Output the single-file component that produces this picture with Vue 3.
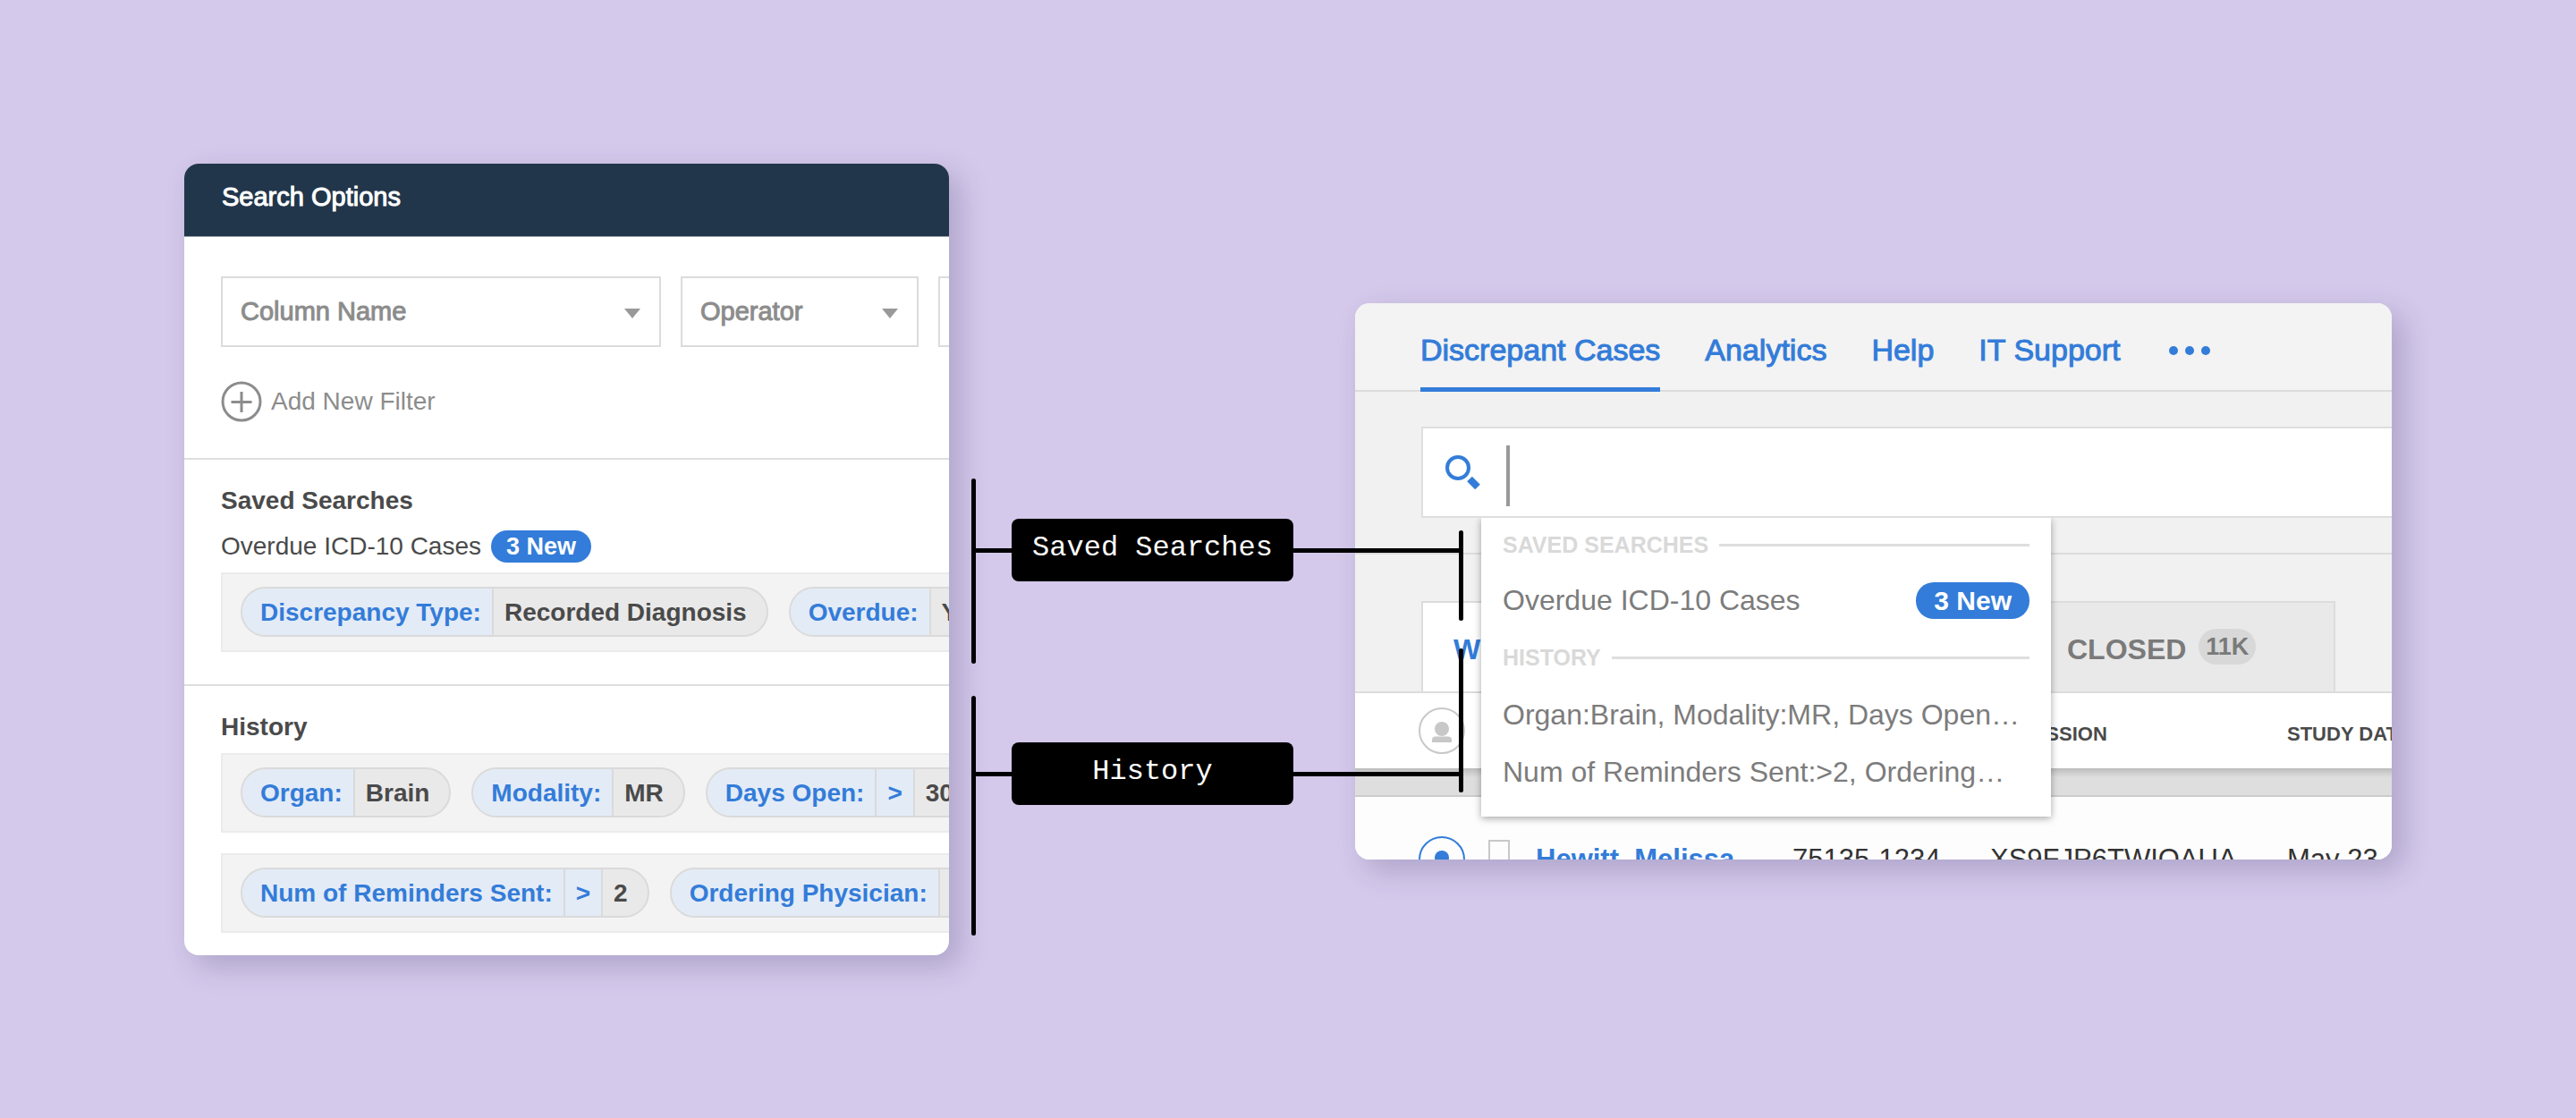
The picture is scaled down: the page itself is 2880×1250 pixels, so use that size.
<script setup>
import { ref } from 'vue'

const query = ref('')

const columns = ['Column Name']
const operators = ['Operator']

const savedSearches = [
  {
    name: 'Overdue ICD-10 Cases',
    badge: '3 New',
    filters: [
      { parts: ['Discrepancy Type:'], value: 'Recorded Diagnosis' },
      { parts: ['Overdue:'], value: 'Yes' },
    ],
  },
]

const history = [
  [
    { parts: ['Organ:'], value: 'Brain' },
    { parts: ['Modality:'], value: 'MR' },
    { parts: ['Days Open:', '>'], value: '30' },
  ],
  [
    { parts: ['Num of Reminders Sent:', '>'], value: '2' },
    { parts: ['Ordering Physician:'], value: '' },
  ],
]

const nav = ['Discrepant Cases', 'Analytics', 'Help', 'IT Support']
const recent = ['Organ:Brain, Modality:MR, Days Open…', 'Num of Reminders Sent:>2, Ordering…']
const callouts = ['Saved Searches', 'History']
</script>

<template>
  <main class="stage">
    <section class="card options">
      <header class="options-head">Search Options</header>

      <div class="filters">
        <div class="fields">
          <span class="field wide">
            <select aria-label="Column Name">
              <option v-for="c in columns" :key="c">{{ c }}</option>
            </select>
            <svg class="caret" viewBox="0 0 18 11"><path d="M0 0h18L9 11z" /></svg>
          </span>
          <span class="field narrow">
            <select aria-label="Operator">
              <option v-for="o in operators" :key="o">{{ o }}</option>
            </select>
            <svg class="caret" viewBox="0 0 18 11"><path d="M0 0h18L9 11z" /></svg>
          </span>
          <input class="field-value" type="text" aria-label="Value" />
        </div>
        <button class="add" type="button">
          <svg viewBox="0 0 46 46" fill="none" stroke="currentColor" stroke-width="3">
            <circle cx="23" cy="23" r="21" />
            <path d="M23 12v23M11.500 23.500h23" />
          </svg>
          Add New Filter
        </button>
      </div>

      <div class="group">
        <h2>Saved Searches</h2>
        <template v-for="s in savedSearches" :key="s.name">
          <p class="saved-name">{{ s.name }} <span class="badge">{{ s.badge }}</span></p>
          <div class="tray">
            <span v-for="(f, i) in s.filters" :key="i" class="pill">
              <b v-for="p in f.parts" :key="p" class="key">{{ p }}</b>
              <b class="val">{{ f.value }}</b>
            </span>
          </div>
        </template>
      </div>

      <div class="group history">
        <h2>History</h2>
        <div v-for="(row, r) in history" :key="r" class="tray">
          <span v-for="(f, i) in row" :key="i" class="pill">
            <b v-for="p in f.parts" :key="p" class="key">{{ p }}</b>
            <b class="val">{{ f.value }}</b>
          </span>
        </div>
      </div>
    </section>

    <aside class="callouts">
      <div class="brackets left"><i class="tall-1"></i><i class="tall-2"></i></div>
      <div class="labels">
        <div v-for="c in callouts" :key="c" class="callout">
          <i class="lead"></i><span class="tag">{{ c }}</span><i class="trail"></i>
        </div>
      </div>
      <div class="brackets right"><i class="short-1"></i><i class="short-2"></i></div>
    </aside>

    <section class="card cases">
      <nav class="nav">
        <a v-for="(n, i) in nav" :key="n" href="#" :class="{ active: i === 0 }">{{ n }}</a>
        <button class="more" type="button" aria-label="More">
          <svg viewBox="0 0 48 12" fill="currentColor">
            <circle cx="6" cy="6" r="5" /><circle cx="24" cy="6" r="5" /><circle cx="42" cy="6" r="5" />
          </svg>
        </button>
      </nav>

      <div class="search-band">
        <div class="search">
          <svg class="lens" viewBox="0 0 40 40">
            <circle cx="15" cy="15" r="12" fill="none" stroke="currentColor" stroke-width="4" />
            <path d="M28 27.500l9 9" stroke="currentColor" stroke-width="8" />
          </svg>
          <i class="cursor"></i>
          <input v-model="query" type="search" aria-label="Search" />

          <div class="menu">
            <div class="menu-head">SAVED SEARCHES</div>
            <a href="#" class="menu-item">Overdue ICD-10 Cases<span class="badge large">3 New</span></a>
            <div class="menu-head">HISTORY</div>
            <a v-for="r in recent" :key="r" href="#" class="menu-item">{{ r }}</a>
          </div>
        </div>
      </div>

      <div class="tabs">
        <button class="tab current" type="button">W</button>
        <button class="tab closed" type="button">CLOSED <span class="count">11K</span></button>
      </div>

      <div class="list">
        <table>
          <colgroup>
            <col class="c-user" /><col class="c-doc" /><col class="c-name" />
            <col class="c-id" /><col class="c-acc" /><col />
          </colgroup>
          <thead>
            <tr>
              <th class="user">
                <svg class="avatar" viewBox="0 0 52 52" fill="currentColor">
                  <circle cx="26" cy="26" r="25" fill="none" stroke="currentColor" stroke-width="2" />
                  <circle cx="26" cy="24" r="8" />
                  <path d="M15 39v-2.500a4 4 0 0 1 4-4h14a4 4 0 0 1 4 4V39z" />
                </svg>
              </th>
              <th></th><th></th><th></th>
              <th class="label">ACCESSION</th>
              <th class="label">STUDY DATE</th>
            </tr>
          </thead>
          <tbody>
            <tr class="band"><td colspan="6"></td></tr>
            <tr class="case">
              <td class="user">
                <svg class="avatar" viewBox="0 0 52 52" fill="currentColor">
                  <circle cx="26" cy="26" r="25" fill="none" stroke="currentColor" stroke-width="2" />
                  <circle cx="26" cy="24" r="8" />
                  <path d="M15 39v-2.500a4 4 0 0 1 4-4h14a4 4 0 0 1 4 4V39z" />
                </svg>
              </td>
              <td>
                <svg class="doc" viewBox="0 0 24 44" fill="none" stroke="currentColor" stroke-width="2">
                  <rect x="1" y="1" width="22" height="42" />
                </svg>
              </td>
              <td><a href="#">Hewitt, Melissa</a></td>
              <td>75135-1234</td>
              <td>XS9FJP6TWIOAUA</td>
              <td>May 23</td>
            </tr>
          </tbody>
        </table>
      </div>
    </section>
  </main>
</template>

<style>
body {
  margin: 0;
  background: #d4c9eb;
}
</style>

<style scoped>
.stage,
.stage * {
  box-sizing: border-box;
}

.stage {
  display: grid;
  grid-template-columns: 855fr 454fr 1159fr;
  align-items: center;
  min-height: 100vh;
  padding: 0 206px;
  overflow: hidden;
  font-family: "Liberation Sans", Arial, sans-serif;
  font-size: 28px;
  line-height: 36px;
  white-space: nowrap;
  background: #d4c9eb;
}

button,
input,
select {
  font: inherit;
  color: inherit;
  margin: 0;
}

a {
  color: inherit;
  text-decoration: none;
}

svg {
  display: block;
  flex: none;
}

.card {
  min-width: 0;
  border-radius: 16px;
  overflow: hidden;
  background: #fff;
  box-shadow: 12px 12px 32px rgba(40, 30, 80, 0.22);
}

/* Search options */
.options-head {
  height: 82px;
  padding: 19px 42px 0;
  background: #22364b;
  border-bottom: 1px solid #9aa4ae;
  color: #fff;
  font-size: 29px;
}

.filters {
  padding: 44px 0 40px 41px;
}

.fields {
  display: flex;
  gap: 22px;
  color: #8c8c8c;
  font-size: 29px;
}

.field {
  position: relative;
  flex: none;
}

.wide {
  width: 492px;
}

.narrow {
  width: 266px;
}

.field select,
.field-value {
  width: 100%;
  height: 79px;
  padding: 0 20px;
  border: 2px solid #dcdcdc;
  border-radius: 0;
  background: #fff;
  appearance: none;
  outline: none;
}

.field-value {
  flex: none;
  width: 300px;
}

.options-head,
.field select {
  -webkit-text-stroke: 1px currentColor;
}

.caret {
  position: absolute;
  right: 23px;
  top: 36px;
  width: 18px;
  height: 11px;
  fill: #999;
  pointer-events: none;
}

.add {
  display: flex;
  align-items: center;
  gap: 10px;
  margin-top: 38px;
  padding: 0;
  border: 0;
  background: none;
  color: #8c8c8c;
}

.add svg {
  width: 46px;
  height: 46px;
}

.group {
  padding: 28px 0 36px 41px;
  border-top: 2px solid #dedede;
  color: #4a4a4a;
}

.history {
  padding-bottom: 25px;
}

h2 {
  margin: 0;
  font-size: 28px;
  line-height: 36px;
}

.saved-name {
  display: flex;
  align-items: center;
  gap: 11px;
  margin: 15px 0 11px;
}

.badge {
  padding: 0 17px;
  border-radius: 20px;
  background: #337cd9;
  color: #fff;
  font-size: 27px;
  line-height: 36px;
  font-weight: 700;
}

.tray {
  display: flex;
  gap: 23px;
  height: 89px;
  padding: 14px 0 0 20px;
  border: 2px solid #ebebeb;
  border-right: 0;
  background: #f3f3f3;
}

h2 + .tray {
  margin-top: 11px;
}

.tray + .tray {
  margin-top: 23px;
}

.pill {
  display: flex;
  flex: none;
  height: 56px;
  border: 2px solid #dadada;
  border-radius: 28px;
  background: #e9e9e9;
  line-height: 54px;
  overflow: hidden;
}

.key,
.val {
  padding: 0 12px;
}

.key {
  border-right: 2px solid #dadada;
  background: #e3ebf6;
  color: #337cd9;
}

.key:first-child {
  padding-left: 20px;
}

.val {
  padding-right: 22px;
}

.val:empty {
  min-width: 100px;
}

/* Callouts between the two cards */
.callouts {
  position: relative;
  z-index: 1;
  display: flex;
  align-items: flex-start;
  margin: 331px -121px 0 25px;
}

.callouts i {
  flex: none;
  background: #000;
}

.brackets {
  display: flex;
  flex-direction: column;
}

.brackets i {
  width: 5px;
  border-radius: 3px;
}

.left {
  gap: 36px;
}

.right {
  gap: 31px;
  padding-top: 58px;
}

.tall-1 {
  height: 207px;
}

.tall-2 {
  height: 268px;
}

.short-1 {
  height: 101px;
}

.short-2 {
  height: 161px;
}

.labels {
  display: flex;
  flex: 1;
  flex-direction: column;
  gap: 180px;
  padding-top: 45px;
}

.callout {
  display: flex;
  align-items: center;
}

.lead {
  width: 40px;
  height: 5px;
}

.callouts .trail {
  flex: 1;
  height: 5px;
}

.tag {
  width: 315px;
  padding-bottom: 4px;
  border-radius: 8px;
  background: #000;
  color: #fff;
  font-family: "Liberation Mono", monospace;
  font-size: 32px;
  line-height: 66px;
  text-align: center;
}

/* Case list */
.cases {
  margin-top: 50px;
  background: #f1f1f1;
}

.nav {
  display: flex;
  gap: 50px;
  height: 99px;
  padding-left: 73px;
  border-bottom: 2px solid #dcdcdc;
  background: #f3f3f3;
  color: #337cd9;
  font-size: 34px;
  line-height: 104px;
}

.nav a {
  height: 99px;
  -webkit-text-stroke: 1px currentColor;
}

.nav .active {
  border-bottom: 5px solid #337cd9;
}

.more {
  padding: 0 0 0 4px;
  border: 0;
  background: none;
}

.more svg {
  width: 48px;
  height: 12px;
  margin-top: 8px;
}

.search-band {
  padding: 39px 0 39px 74px;
  border-bottom: 2px solid #dcdcdc;
}

.search {
  position: relative;
  display: flex;
  align-items: center;
  height: 102px;
  padding-left: 24px;
  border: 2px solid #dedede;
  border-right: 0;
  background: #fff;
}

.lens {
  width: 40px;
  height: 40px;
  color: #337cd9;
}

.cursor {
  width: 4px;
  height: 68px;
  margin: 8px 0 0 29px;
  background: #999;
}

.search input {
  flex: 1;
  min-width: 0;
  height: 90px;
  padding: 0 8px;
  border: 0;
  background: none;
  outline: none;
  font-size: 34px;
}

.menu {
  position: absolute;
  z-index: 1;
  top: calc(100% + 2px);
  left: 65px;
  width: 637px;
  padding: 0 24px 18px;
  background: #fff;
  box-shadow: 0 2px 8px rgba(0, 0, 0, 0.35);
  clip-path: inset(0 -20px -20px -20px);
}

.menu-head,
.menu-item {
  display: flex;
  align-items: center;
  height: 64px;
}

.menu-head {
  gap: 12px;
  color: #d9d9d9;
  font-size: 25px;
  font-weight: 700;
}

.menu-head:first-child {
  height: 60px;
}

.menu-head::after {
  content: "";
  flex: 1;
  height: 3px;
  background: #dedede;
}

.menu-item {
  justify-content: space-between;
  color: #7c7c7c;
  font-size: 32px;
}

.badge.large {
  padding: 0 20px;
  font-size: 30px;
  line-height: 41px;
}

.tabs {
  display: flex;
  padding: 52px 63px 0 74px;
  border-bottom: 2px solid #dcdcdc;
}

.tab {
  height: 101px;
  border: 2px solid #dcdcdc;
  border-bottom: 0;
  border-radius: 0;
  font-size: 32px;
  font-weight: 700;
  text-align: left;
}

.current {
  flex: 1;
  padding: 4px 34px 0;
  background: #fff;
  color: #337cd9;
}

.closed {
  display: flex;
  align-items: center;
  flex: none;
  gap: 14px;
  width: 400px;
  padding: 4px 0 0 100px;
  border-left: 0;
  background: #e9e9e9;
  color: #7a7a7a;
}

.count {
  width: 64px;
  margin-bottom: 6px;
  border-radius: 20px;
  background: #d8d8d8;
  font-size: 27px;
  line-height: 40px;
  text-align: center;
}

.list {
  height: 186px;
  overflow: hidden;
  background: #fdfdfd;
}

table {
  width: 100%;
  table-layout: fixed;
  border-collapse: collapse;
  font-size: 31px;
  color: #333;
}

.c-user { width: 149px; }
.c-doc { width: 53px; }
.c-name { width: 287px; }
.c-id { width: 221px; }
.c-acc { width: 332px; }

th,
td {
  padding: 0;
  text-align: left;
}

thead tr {
  height: 84px;
  background: #fff;
  color: #c8c8c8;
}

.label {
  padding-top: 8px;
  color: #4a4a4a;
  font-size: 22px;
}

.band td {
  height: 31px;
  border-bottom: 2px solid #cbcbcb;
  background: linear-gradient(#bcbcbc, #dedede 10px);
}

.case {
  height: 140px;
}

.case a {
  color: #337cd9;
  font-weight: 700;
}

.user {
  padding-left: 71px;
}

.case .user {
  color: #337cd9;
}

.avatar {
  width: 52px;
  height: 52px;
}

.doc {
  width: 24px;
  height: 44px;
  color: #c8c8c8;
}
</style>
